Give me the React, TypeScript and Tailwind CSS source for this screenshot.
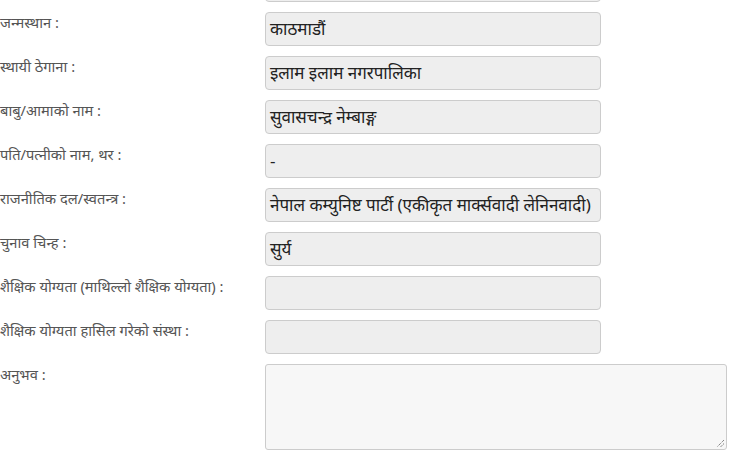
const rows: { label: string; value: string }[] = [
  { label: "जन्मस्थान :", value: "काठमाडौं" },
  { label: "स्थायी ठेगाना :", value: "इलाम इलाम नगरपालिका" },
  { label: "बाबु/आमाको नाम :", value: "सुवासचन्द्र  नेम्बाङ्ग" },
  { label: "पति/पत्नीको नाम, थर :", value: "-" },
  { label: "राजनीतिक दल/स्वतन्त्र :", value: "नेपाल कम्युनिष्ट पार्टी (एकीकृत मार्क्सवादी लेनिनवादी)" },
  { label: "चुनाव चिन्ह :", value: "सुर्य" },
  { label: "शैक्षिक योग्यता (माथिल्लो शैक्षिक योग्यता) :", value: "" },
  { label: "शैक्षिक योग्यता हासिल गरेको संस्था :", value: "" },
];

export default function App() {
  return (
    <div className="h-[454px] w-[742px] overflow-hidden bg-white font-['Noto_Sans','DejaVu_Sans',sans-serif]">
      <div className="-mt-[32px]">
        {/* row scrolled above the top edge */}
        <div className="flex mb-[10px]">
          <div className="w-[265px] shrink-0" />
          <div className="h-[34px] w-[336px] rounded border border-[#cccccc] bg-[#eeeeee]" />
        </div>

        {rows.map((r) => (
          <div key={r.label} className="flex mb-[10px]">
            <div className="w-[265px] shrink-0 text-[14.7px] leading-[20px] text-[#555555] whitespace-nowrap">
              {r.label}
            </div>
            <div className="h-[34px] w-[336px] rounded border border-[#cccccc] bg-[#eeeeee] px-[4px] flex items-center text-[17px] text-[#222222] whitespace-nowrap overflow-hidden">
              {r.value}
            </div>
          </div>
        ))}

        <div className="flex">
          <div className="w-[265px] shrink-0 text-[14.7px] leading-[20px] text-[#555555]">
            अनुभव :
          </div>
          <div className="relative h-[86px] w-[462px] rounded-[3px] border border-[#cccccc] bg-[#f7f7f7]">
            <svg className="absolute right-[1px] bottom-[1px]" width="9" height="9" viewBox="0 0 9 9">
              <path d="M8 1 L1 8 M8 4.5 L4.5 8" stroke="#555" strokeWidth="1" strokeDasharray="1 1" />
            </svg>
          </div>
        </div>
      </div>
    </div>
  );
}
